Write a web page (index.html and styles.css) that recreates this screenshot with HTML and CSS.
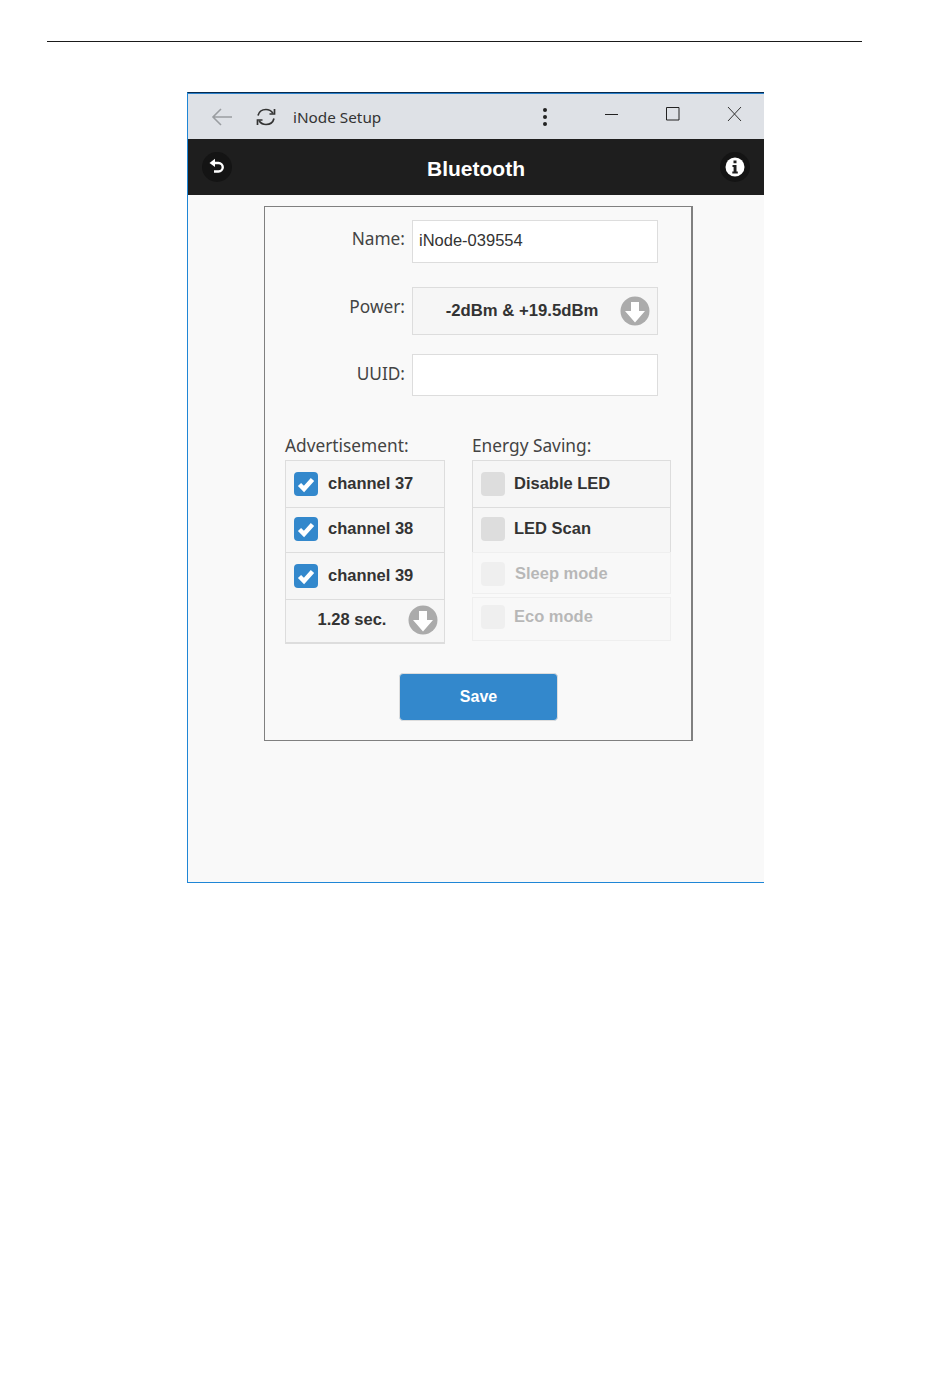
FILE: index.html
```html
<!DOCTYPE html>
<html lang="en">
<head>
<meta charset="utf-8">
<title>iNode Setup</title>
<link rel="stylesheet" href="styles.css">
</head>
<body>
<hr class="rule">
<main class="window">
  <div class="titlebar">
    <svg class="tb-back" width="22" height="20" viewBox="0 0 22 20"><path d="M21 10H2M10 2 2 10l8 8" fill="none" stroke="#9a9da1" stroke-width="1.6"/></svg>
    <svg class="tb-refresh" width="22" height="22" viewBox="0 0 22 22"><path d="M3 9.500C4 5.500 7 3.500 11 3.500c3 0 5.200 1.200 6.800 3.500M19.500 3v5h-5M19 12.500c-1 4-4 6-8 6-3 0-5.200-1.200-6.800-3.500M2.500 19v-5h5" fill="none" stroke="#333" stroke-width="1.700"/></svg>
    <span class="tb-title">iNode Setup</span>
    <span class="tb-dots"><i></i><i></i><i></i></span>
    <svg class="tb-min" width="14" height="14" viewBox="0 0 14 14"><path d="M0 7.500h13" stroke="#222" stroke-width="1"/></svg>
    <svg class="tb-max" width="14" height="14" viewBox="0 0 14 14"><path d="M.5.500h12.500v12.500H.5z" fill="none" stroke="#222" stroke-width="1"/></svg>
    <svg class="tb-close" width="15" height="14" viewBox="0 0 15 14"><path d="M1 0l13 14M14 0 1 14" stroke="#333" stroke-width="1"/></svg>
  </div>
  <header class="appbar">
    <span class="round-btn"><svg width="18" height="18" viewBox="0 0 18 18"><path d="M4 5h6.500a4.200 4.200 0 0 1 0 8.500H6" fill="none" stroke="#fff" stroke-width="2.400"/><path d="M7 0.800v8.200L1.500 5z" fill="#fff"/></svg></span>
    <h1 class="app-title">Bluetooth</h1>
    <span class="round-btn"><svg width="20" height="20" viewBox="0 0 20 20"><circle cx="10" cy="10" r="9.500" fill="#fff"/><path d="M8.500 3.500h3v2.800h-3zM7.500 8h4v6.500h1.300v2H7.300v-2h1.300v-4.500H7.500z" fill="#1e1e1e"/></svg></span>
  </header>
  <section class="content">
    <form class="panel">
      <div class="field field-name">
        <label class="field-label">Name:</label>
        <div class="input">iNode-039554</div>
      </div>
      <div class="field field-power">
        <label class="field-label">Power:</label>
        <div class="select">
          <span class="select-text">-2dBm &amp; +19.5dBm</span>
          <svg class="down" width="30" height="30" viewBox="0 0 30 30"><circle cx="15" cy="15" r="14.500" fill="#ababab"/><path d="M11 6h8v9h6L15 26.500 5 15h6z" fill="#fff"/></svg>
        </div>
      </div>
      <div class="field field-uuid">
        <label class="field-label">UUID:</label>
        <div class="input"></div>
      </div>
      <div class="columns">
        <div class="col col-adv">
          <div class="col-label">Advertisement:</div>
          <div class="list">
            <div class="item item-a"><span class="box on"><svg width="24" height="24" viewBox="0 0 24 24"><path d="M5.500 12.500 10 17l8.500-9.500" fill="none" stroke="#fff" stroke-width="4.500"/></svg></span><span class="item-text">channel 37</span></div>
            <div class="item item-b"><span class="box on"><svg width="24" height="24" viewBox="0 0 24 24"><path d="M5.500 12.500 10 17l8.500-9.500" fill="none" stroke="#fff" stroke-width="4.500"/></svg></span><span class="item-text">channel 38</span></div>
            <div class="item item-c"><span class="box on"><svg width="24" height="24" viewBox="0 0 24 24"><path d="M5.500 12.500 10 17l8.500-9.500" fill="none" stroke="#fff" stroke-width="4.500"/></svg></span><span class="item-text">channel 39</span></div>
            <div class="item item-sel">
              <span class="sel-text">1.28 sec.</span>
              <svg class="down" width="30" height="30" viewBox="0 0 30 30"><circle cx="15" cy="15" r="14.500" fill="#ababab"/><path d="M11 6h8v9h6L15 26.500 5 15h6z" fill="#fff"/></svg>
            </div>
          </div>
        </div>
        <div class="col col-energy">
          <div class="col-label">Energy Saving:</div>
          <div class="list list-energy">
            <div class="item item-a"><span class="box"></span><span class="item-text">Disable LED</span></div>
            <div class="item item-b"><span class="box"></span><span class="item-text">LED Scan</span></div>
          </div>
          <div class="list-dim">
            <div class="item item-dim item-sleep"><span class="box"></span><span class="item-text">Sleep mode</span></div>
            <div class="item item-dim item-eco"><span class="box"></span><span class="item-text">Eco mode</span></div>
          </div>
        </div>
      </div>
      <button class="save" type="button">Save</button>
    </form>
  </section>
</main>
</body>
</html>
```
FILE: styles.css
```css
html, body { margin: 0; padding: 0; background: #fff; }
body { width: 950px; height: 1387px; overflow: hidden; font-family: "Liberation Sans", Arial, sans-serif; color: #222; }

.rule { border: 0; height: 1px; background: #1a1a1a; margin: 41px 88px 0 47px; }

.window {
  width: 577px; height: 791px; margin: 50px 0 0 187px; box-sizing: border-box;
  display: flex; flex-direction: column;
  border-top: 1px solid #062a4e; border-left: 1px solid #1f86d6; border-bottom: 1px solid #1f86d6;
  background: #f9f9f9;
}

.titlebar {
  height: 46px; box-sizing: border-box; border-top: 1px solid #2a7fc8;
  background: #dee1e6; display: flex; align-items: center; flex: none;
}
.titlebar svg { flex: none; display: block; }
.tb-back { margin-left: 23px; }
.tb-refresh { margin-left: 22px; }
.tb-title { margin-left: 16px; width: 250px; font: 15.300px "Noto Sans", sans-serif; color: #333; }
.tb-dots { display: flex; flex-direction: column; gap: 3px; width: 4px; }
.tb-dots i { display: block; width: 4px; height: 4px; background: #222; border-radius: 50%; }
.tb-min { margin-left: 58px; margin-top: -5px; }
.tb-max { margin-left: 47px; margin-top: -5px; }
.tb-close { margin-left: 47px; margin-top: -5px; }

.appbar {
  height: 56px; flex: none; background: #1e1e1e; color: #fff;
  display: flex; align-items: center; justify-content: space-between; padding: 0 14px;
}
.round-btn { width: 30px; height: 30px; border-radius: 50%; background: #141414; display: flex; align-items: center; justify-content: center; }
.app-title { margin: 4px 0 0 0; font-size: 21px; font-weight: bold; }

.content { flex: 1; padding: 11px 71px 0 76px; }
.panel {
  box-sizing: border-box; height: 535px; width: 429px;
  border: 1px solid #808080; border-right-width: 2px; background: #f9f9f9;
  display: flex; flex-direction: column;
}

.field { display: flex; gap: 7px; }
.field-label { width: 140px; text-align: right; font: 17.300px/21px "Noto Sans", sans-serif; color: #444; }
.field-name { margin-top: 13px; height: 43px; }
.field-name .field-label { padding-top: 8px; }
.field-power { margin-top: 24px; height: 48px; }
.field-power .field-label { padding-top: 9px; }
.field-uuid { margin-top: 19px; height: 42px; }
.field-uuid .field-label { padding-top: 9px; }

.input {
  width: 246px; box-sizing: border-box; background: #fff; border: 1px solid #ddd;
  font-size: 16.500px; line-height: 39px; padding-left: 6px; color: #333;
}
.select {
  width: 246px; box-sizing: border-box; background: #f6f6f6; border: 1px solid #ddd;
  display: flex; align-items: center;
}
.select-text { width: 218px; text-align: center; font-size: 16.700px; font-weight: bold; color: #333; }
.down { display: block; flex: none; }
.select .down { margin-left: -11px; }

.columns { display: flex; margin: 40px 0 0 20px; gap: 27px; }
.col-label { font: 17.300px/20px "Noto Sans", sans-serif; color: #444; height: 20px; margin-bottom: 4px; }
.col-adv { width: 160px; }
.col-energy { width: 199px; }

.list { border: 1px solid #ddd; background: #f6f6f6; }
.col-adv .list { border-bottom-width: 2px; }
.item {
  display: flex; align-items: center; box-sizing: border-box;
  font-size: 16.500px; font-weight: bold; color: #333; padding-left: 8px; gap: 10px;
}
.col-energy .item { gap: 9px; }
.item-text { margin-top: -2px; }
.item + .item { border-top: 1px solid #ddd; }
.item-a { height: 46px; }
.item-b { height: 45px; padding-bottom: 2px; }
.item-c { height: 47px; }
.item-sel { height: 43px; padding-left: 0; gap: 0; }
.sel-text { width: 132px; text-align: center; margin-top: -4px; }
.sel-text + .down { margin: -2px 0 0 -10px; }

.box { width: 24px; height: 24px; border-radius: 4px; background: #dddddd; flex: none; display: block; }
.box svg { display: block; }
.box.on { background: #3388cc; }

.list-energy { border-bottom: 0; }
.list-dim { opacity: .33; }
.list-dim .item { color: #333; border: 1px solid #ddd; background: #f6f6f6; }
.item-sleep { height: 42px; padding-top: 2px; }
.item-sleep .item-text { margin-left: 1px; }
.item-dim.item-eco { height: 44px; margin-top: 3px; padding-bottom: 4px; border-top: 1px solid #ddd; }

.save {
  display: block; width: 159px; height: 48px; margin: 29px 0 0 134px; align-self: flex-start;
  background: #3388cc; border: 1px solid #ddd; border-radius: 4px; color: #fff;
  font: bold 16px "Liberation Sans", sans-serif; padding: 0;
}
```
